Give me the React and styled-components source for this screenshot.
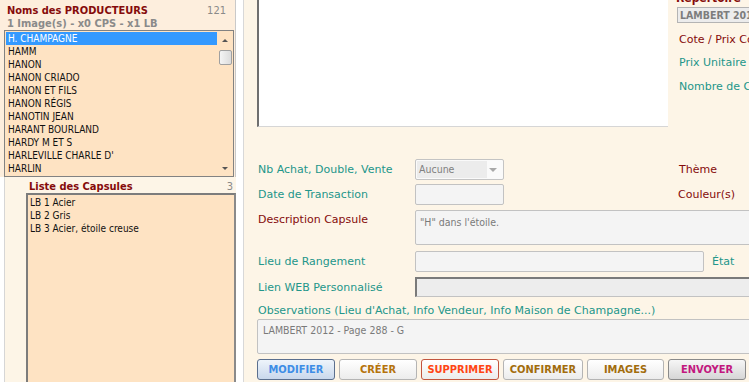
import React from 'react';
import styled, { createGlobalStyle } from 'styled-components';

const GlobalStyle = createGlobalStyle`
  body {
    margin: 0;
    background: #ffffff;
    font-family: 'DejaVu Sans', Verdana, sans-serif;
  }
`;

const TEAL = '#23968a';
const DARKRED = '#850b0b';
const PEACH = '#fee3c3';
const CREAM = '#fdf5e7';
const CONDENSED = "'DejaVu Sans Condensed', 'DejaVu Sans', sans-serif";

const Page = styled.div`
  width: 749px;
  height: 382px;
  overflow: hidden;
  display: flex;
`;

const LeftPanel = styled.aside`
  width: 236px;
  flex: none;
  display: flex;
  flex-direction: column;
`;

const ProducersBox = styled.section`
  height: 177px;
  box-sizing: border-box;
  padding-top: 4px;
  background: #fdeedd;
  border-right: 1px solid #c9c9c9;
`;

const HeaderLine = styled.div`
  display: flex;
  justify-content: space-between;
  padding: ${({ $indent }) => `0 ${$indent ? 3 : 9}px 0 ${$indent ? 3 : 7}px`};
  height: 13px;
  line-height: 13px;
  font-family: ${CONDENSED};
  font-size: 11px;
  font-weight: bold;
  color: ${({ $muted }) => ($muted ? '#8a8a8a' : DARKRED)};
`;

const Count = styled.span`
  font-weight: normal;
  color: #8a8a8a;
`;

const ListBox = styled.div`
  margin: 0 1px 0 4px;
  height: 147px;
  box-sizing: border-box;
  border: 1px solid #828282;
  background: ${PEACH};
  display: flex;
  overflow: hidden;
`;

const Items = styled.ul`
  flex: 1;
  margin: 0;
  padding: 1px 0 0 1px;
  list-style: none;
`;

const Item = styled.li`
  height: 13px;
  line-height: 13px;
  padding-left: 2px;
  font-family: ${CONDENSED};
  font-size: 10px;
  color: ${({ $selected }) => ($selected ? '#ffffff' : '#111111')};
  background: ${({ $selected }) => ($selected ? '#3399ff' : 'transparent')};
  white-space: nowrap;
`;

const ScrollBar = styled.div`
  width: 16px;
  flex: none;
  display: flex;
  flex-direction: column;
  align-items: center;
  padding-top: 1px;
`;

const Arrow = styled.div`
  width: 16px;
  height: 16px;
  display: flex;
  align-items: center;
  justify-content: center;
  &::after {
    content: '';
    border-left: 3px solid transparent;
    border-right: 3px solid transparent;
    ${({ $down }) => ($down ? 'border-top: 3px solid #555;' : 'border-bottom: 3px solid #555;')}
  }
`;

const Thumb = styled.div`
  width: 13px;
  height: 15px;
  margin-top: 2px;
  box-sizing: border-box;
  border: 1px solid #a0a0a0;
  border-radius: 2px;
  background: linear-gradient(to right, #f4f4f4, #dcdcdc);
`;

const Spacer = styled.div`
  flex: 1;
`;

const CapsuleBox = styled.section`
  flex: 1;
  margin-left: 4px;
  border-left: 1px solid #d6d6d6;
  background: ${CREAM};
  display: flex;
  flex-direction: column;
  padding: 3px 0 0 21px;
`;

const CapsuleList = styled.ul`
  flex: 1;
  margin: 0;
  padding: 1px 0 0 0;
  list-style: none;
  background: ${PEACH};
  border-left: 2px solid #7c7c7c;
  border-top: 2px solid #7c7c7c;
  border-right: 2px solid #8a8a8a;
`;

const Gutter = styled.div`
  width: 7px;
  flex: none;
  background: #ffffff;
  border-right: 1px solid #d8d8d8;
`;

const Main = styled.main`
  flex: 1;
  background: ${CREAM};
  padding-left: 13px;
  display: flex;
  flex-direction: column;
  min-width: 0;
`;

const TopRow = styled.div`
  display: flex;
  height: 127px;
`;

const ImageBox = styled.div`
  width: 411px;
  flex: none;
  box-sizing: border-box;
  background: #ffffff;
  border-left: 2px solid #6f6f6f;
  border-bottom: 1px solid #d6d6d6;
`;

const InfoCol = styled.div`
  margin-left: 8px;
  display: flex;
  flex-direction: column;
  white-space: nowrap;
`;

const SectionTitle = styled.div`
  margin-top: -10px;
  height: 16px;
  line-height: 16px;
  font-family: ${CONDENSED};
  font-size: 12px;
  font-weight: bold;
  color: ${DARKRED};
`;

const ReadOnly = styled.div`
  margin: 1px 0 0 1px;
  width: 90px;
  height: 16px;
  box-sizing: border-box;
  border: 1px solid #b4b4b4;
  background: #ececec;
  line-height: 14px;
  padding-left: 2px;
  font-family: ${CONDENSED};
  font-size: 10.5px;
  font-weight: bold;
  color: #7d7d7d;
  overflow: hidden;
`;

const Label = styled.span`
  font-size: 11px;
  line-height: 14px;
  white-space: nowrap;
  color: ${({ $tone }) => ($tone === 'red' ? DARKRED : TEAL)};
  margin-left: ${({ $shift }) => $shift || 0}px;
  margin-top: ${({ $top }) => $top || 0}px;
`;

const Form = styled.div`
  margin-top: 32px;
  display: flex;
  flex-direction: column;
`;

const Row = styled.div`
  display: grid;
  grid-template-columns: 158px 1fr;
  align-items: ${({ $top }) => ($top ? 'start' : 'center')};
  margin-top: ${({ $gap }) => $gap || 0}px;
  height: ${({ $h }) => $h}px;
`;

const RowLabel = styled(Label)`
  padding-left: 1px;
  padding-top: ${({ $pad }) => $pad || 1}px;
`;

const FieldLine = styled.div`
  display: flex;
  align-items: center;
  height: 100%;
`;

const Select = styled.div`
  width: 89px;
  height: 21px;
  box-sizing: border-box;
  border: 1px solid #c4c4c4;
  border-radius: 2px;
  background: #fafafa;
  display: flex;
  align-items: center;
  padding: 0 6px 0 1px;
`;

const SelectValue = styled.div`
  width: 70px;
  height: 17px;
  line-height: 17px;
  background: #ececec;
  padding-left: 2px;
  box-sizing: border-box;
  font-family: ${CONDENSED};
  font-size: 10.5px;
  color: #808080;
`;

const Caret = styled.div`
  margin-left: auto;
  border-left: 4px solid transparent;
  border-right: 4px solid transparent;
  border-top: 4px solid #a8a8a8;
`;

const Input = styled.div`
  width: ${({ $w }) => ($w ? `${$w}px` : 'calc(100% + 20px)')};
  flex: none;
  height: ${({ $h }) => $h || 21}px;
  box-sizing: border-box;
  border: 1px solid #c2c2c2;
  border-radius: 2px;
  background: #f4f4f4;
  padding: 5px 4px;
  font-family: ${CONDENSED};
  font-size: 10.5px;
  line-height: 12px;
  color: #7a7a7a;
  white-space: nowrap;
`;

const InsetInput = styled(Input)`
  border-radius: 0;
  border-top: 2px solid #7a7a7a;
  border-left: 2px solid #7a7a7a;
  background: #ededed;
`;

const ObsLabel = styled(Label)`
  margin-top: 7px;
  padding-left: 1px;
`;

const ObsArea = styled(Input)`
  margin-top: 1px;
  height: 35px;
  padding: 4px 5px;
`;

const Buttons = styled.div`
  display: flex;
  gap: 4px;
  margin-top: 5px;
`;

const Button = styled.button`
  width: ${({ $w }) => $w || 78}px;
  height: 21px;
  box-sizing: border-box;
  padding: 0;
  border-radius: 3px;
  border: 1px solid ${({ $border }) => $border || '#b4b4b4'};
  background: ${({ $bg }) => $bg || 'linear-gradient(#ffffff, #ececec)'};
  font-family: ${CONDENSED};
  font-size: 11px;
  font-weight: bold;
  color: ${({ $color }) => $color};
  cursor: pointer;
`;

const producers = [
  'H. CHAMPAGNE',
  'HAMM',
  'HANON',
  'HANON CRIADO',
  'HANON ET FILS',
  'HANON RÉGIS',
  'HANOTIN JEAN',
  'HARANT BOURLAND',
  'HARDY M ET S',
  'HARLEVILLE CHARLE D\'',
  'HARLIN',
];

const capsules = ['LB 1 Acier', 'LB 2 Gris', 'LB 3 Acier, étoile creuse'];

const buttons = [
  { label: 'MODIFIER', color: '#3d8de6', border: '#5b6f8e', bg: 'linear-gradient(#eef4fb, #c9d8ec)' },
  { label: 'CRÉER', color: '#b5730c' },
  { label: 'SUPPRIMER', color: '#ff4514', border: '#c2553f' },
  { label: 'CONFIRMER', color: '#a26c0c', w: 80 },
  { label: 'IMAGES', color: '#a26c0c', w: 77 },
  { label: 'ENVOYER', color: '#c2177e', border: '#8a8a8a', bg: 'linear-gradient(#f6f6f6, #d6d6d6)' },
];

export default function App() {
  return (
    <>
      <GlobalStyle />
      <Page>
        <LeftPanel>
          <ProducersBox>
            <HeaderLine>
              Noms des PRODUCTEURS <Count>121</Count>
            </HeaderLine>
            <HeaderLine $muted>1 Image(s) - x0 CPS - x1 LB</HeaderLine>
            <ListBox>
              <Items>
                {producers.map((name, i) => (
                  <Item key={name} $selected={i === 0}>{name}</Item>
                ))}
              </Items>
              <ScrollBar>
                <Arrow />
                <Thumb />
                <Spacer />
                <Arrow $down />
              </ScrollBar>
            </ListBox>
          </ProducersBox>
          <CapsuleBox>
            <HeaderLine $indent>
              Liste des Capsules <Count>3</Count>
            </HeaderLine>
            <CapsuleList>
              {capsules.map((c) => (
                <Item key={c}>{c}</Item>
              ))}
            </CapsuleList>
          </CapsuleBox>
        </LeftPanel>
        <Gutter />
        <Main>
          <TopRow>
            <ImageBox />
            <InfoCol>
              <SectionTitle>Répertoire</SectionTitle>
              <ReadOnly>LAMBERT 2012</ReadOnly>
              <Label $tone="red" $top={10} $shift={3}>Cote / Prix Cote</Label>
              <Label $top={9} $shift={3}>Prix Unitaire TTC</Label>
              <Label $top={10} $shift={3}>Nombre de Capsules</Label>
            </InfoCol>
          </TopRow>
          <Form>
            <Row $h={21}>
              <RowLabel>Nb Achat, Double, Vente</RowLabel>
              <FieldLine>
                <Select>
                  <SelectValue>Aucune</SelectValue>
                  <Caret />
                </Select>
                <Label $tone="red" $shift={175}>Thème</Label>
              </FieldLine>
            </Row>
            <Row $h={21} $gap={4}>
              <RowLabel>Date de Transaction</RowLabel>
              <FieldLine>
                <Input $w={89} />
                <Label $tone="red" $shift={174}>Couleur(s)</Label>
              </FieldLine>
            </Row>
            <Row $h={35} $gap={5} $top>
              <RowLabel $tone="red" $pad={3}>Description Capsule</RowLabel>
              <Input $h={35}>"H" dans l'étoile.</Input>
            </Row>
            <Row $h={21} $gap={6}>
              <RowLabel>Lieu de Rangement</RowLabel>
              <FieldLine>
                <Input $w={289} />
                <Label $shift={8}>État</Label>
              </FieldLine>
            </Row>
            <Row $h={20} $gap={5}>
              <RowLabel>Lien WEB Personnalisé</RowLabel>
              <InsetInput $h={20} />
            </Row>
            <ObsLabel>Observations (Lieu d'Achat, Info Vendeur, Info Maison de Champagne...)</ObsLabel>
            <ObsArea>LAMBERT 2012 - Page 288 - G</ObsArea>
            <Buttons>
              {buttons.map((b) => (
                <Button key={b.label} $color={b.color} $border={b.border} $bg={b.bg} $w={b.w}>
                  {b.label}
                </Button>
              ))}
            </Buttons>
          </Form>
        </Main>
      </Page>
    </>
  );
}
